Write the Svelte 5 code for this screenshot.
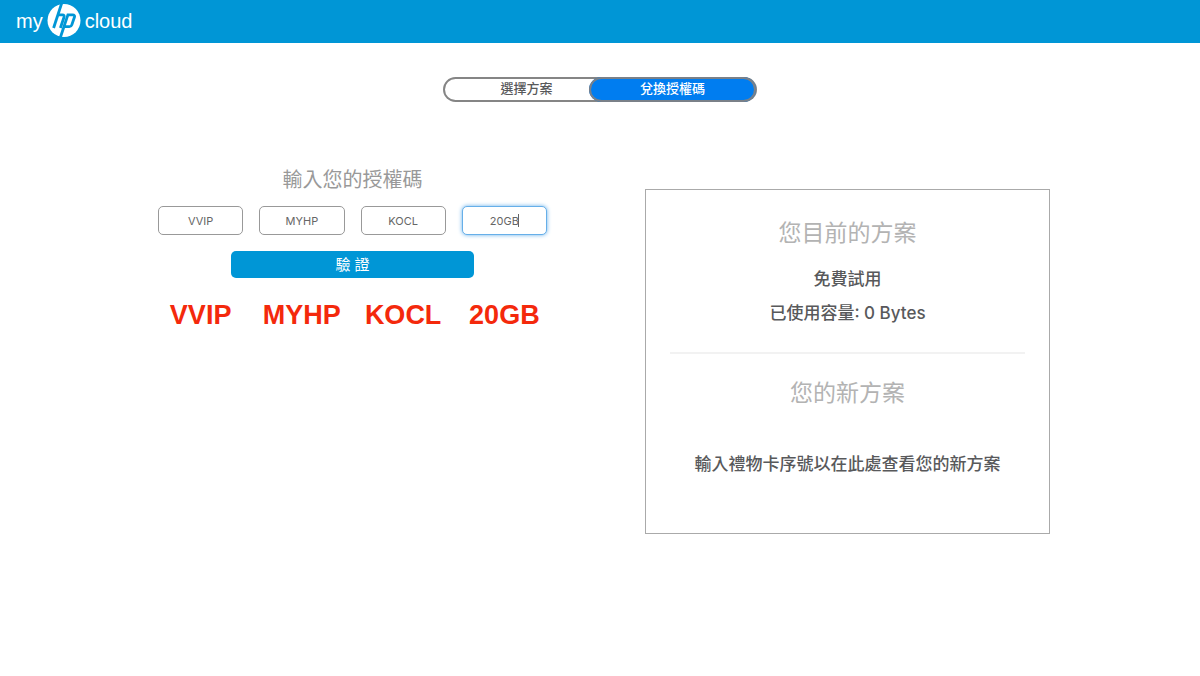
<script>
  const tabs = ['選擇方案', '兌換授權碼'];
  let activeTab = $state(1);
  let codes = $state(['VVIP', 'MYHP', 'KOCL', '20GB']);
  let current = $state(3);
</script>

<header>
  <a class="brand" href="#home" aria-label="my hp cloud">
    <span>my</span>
    <svg width="34" height="34" viewBox="0 0 34 34" aria-hidden="true">
      <circle cx="17" cy="16.5" r="16.5" fill="#fff" />
      <g fill="none" stroke="#0096d6" stroke-width="2.8">
        <path d="M14.6 -0.5 L6.6 24" />
        <path d="M11.4 10.9 H15.4 Q17.8 10.9 17 13.3 L13.4 24" />
        <path d="M13.2 34 L20.9 10.9 H25.6 Q28.2 10.9 27.4 13.3 L24.8 20.9 Q24.2 22.7 22.4 22.7 H17.6" />
      </g>
    </svg>
    <span>cloud</span>
  </a>
</header>

<nav class="tabs">
  {#each tabs as tab, i}
    <button type="button" class:active={activeTab === i} aria-pressed={activeTab === i} onclick={() => (activeTab = i)}>{tab}</button>
  {/each}
</nav>

<main>
  <form onsubmit={(e) => e.preventDefault()}>
    <h1 id="code-title">輸入您的授權碼</h1>
    <div class="codes" role="group" aria-labelledby="code-title">
      {#each codes as _, i}
        <label class:current={current === i}>
          <input type="text" maxlength="4" aria-labelledby="code-title" bind:value={codes[i]} onfocus={() => (current = i)} />
        </label>
      {/each}
    </div>
    <button class="verify" type="submit">驗 證</button>
    <div class="codes echo">
      {#each codes as code}
        <strong>{code}</strong>
      {/each}
    </div>
  </form>

  <section class="plan">
    <h2>您目前的方案</h2>
    <p>免費試用</p>
    <p>已使用容量: 0 Bytes</p>
    <hr />
    <h2>您的新方案</h2>
    <p class="hint">輸入禮物卡序號以在此處查看您的新方案</p>
  </section>
</main>

<style>
  :global(body) {
    margin: 0;
    background: #fff;
    color: #58595b;
    font-family: Inter, 'Noto Sans CJK TC', sans-serif;
  }
  header {
    display: flex;
    box-sizing: border-box;
    height: 43px;
    padding: 4px 16px;
    background: #0096d6;
  }
  .brand {
    display: flex;
    align-items: center;
    gap: 4px;
    height: 34px;
    color: #fff;
    font: 20px/34px 'Liberation Sans', sans-serif;
    text-decoration: none;
  }
  .tabs {
    display: grid;
    grid-template-columns: 146px 167px;
    width: 314px;
    height: 25px;
    margin: 34px auto 0;
  }
  button {
    padding: 0;
    border: 0;
    font-family: inherit;
    cursor: pointer;
  }
  .tabs button {
    height: 25px;
    padding-bottom: 2px;
    border-radius: 13px;
    background: none;
    color: #58595b;
    font-size: 13px;
    font-weight: 500;
    line-height: 23px;
  }
  .tabs {
    border-radius: 13px;
    box-shadow: inset 0 0 0 2px #858585;
  }
  .tabs button:first-child {
    width: 167px;
  }
  .tabs .active {
    z-index: 1;
    background: #007df0;
    box-shadow: inset 0 0 0 2px #7a8088;
    color: #fff;
  }
  main {
    display: grid;
    grid-template-columns: 1fr 1fr;
    align-items: start;
    gap: 90px;
    width: 75%;
    margin: 64px auto 0;
  }
  form {
    display: flex;
    flex-direction: column;
    align-items: center;
    padding: 0 8px;
  }
  h1, h2 {
    margin: 0;
    font-weight: 400;
    text-align: center;
  }
  h1 {
    color: #999;
    font-size: 20px;
    line-height: 28px;
  }
  .codes {
    display: grid;
    grid-template-columns: repeat(4, 1fr);
    gap: 16px;
    width: 100%;
    margin-top: 12px;
  }
  label {
    position: relative;
  }
  input {
    display: block;
    box-sizing: border-box;
    width: 100%;
    height: 29px;
    padding: 0;
    border: 1px solid #999;
    border-radius: 5px;
    outline: 0;
    background: #fff;
    color: #666;
    font: 11px/27px Inter, sans-serif;
    text-align: center;
    caret-color: transparent;
  }
  .current input {
    border-color: #66afe9;
    box-shadow: 0 0 4px #66afe9;
  }
  .current::after {
    content: '';
    position: absolute;
    top: 8px;
    left: calc(50% + 14px);
    width: 1px;
    height: 13px;
    background: #666;
  }
  .verify {
    width: 243px;
    max-width: 100%;
    height: 27px;
    margin-top: 16px;
    border-radius: 5px;
    background: #0096d6;
    color: #fff;
    font-size: 15px;
    line-height: 27px;
  }
  .echo {
    margin-top: 20px;
    color: #f4290c;
    font: 27px/34px 'Liberation Sans', sans-serif;
    text-align: center;
  }
  strong {
    font-weight: 700;
  }
  .plan {
    box-sizing: border-box;
    margin-top: 23px;
    padding: 26px 24px 52px;
    border: 1px solid #aaa;
    text-align: center;
  }
  h2 {
    color: #b3b3b3;
    font-size: 23px;
    line-height: 34px;
  }
  p {
    margin: 0;
    font-size: 17px;
    font-weight: 500;
    line-height: 34px;
  }
  h2 + p {
    margin-top: 12px;
  }
  hr {
    height: 2px;
    margin: 22px 0;
    border: 0;
    background: #f2f2f2;
  }
  h2 + .hint {
    margin-top: 37px;
  }
</style>
